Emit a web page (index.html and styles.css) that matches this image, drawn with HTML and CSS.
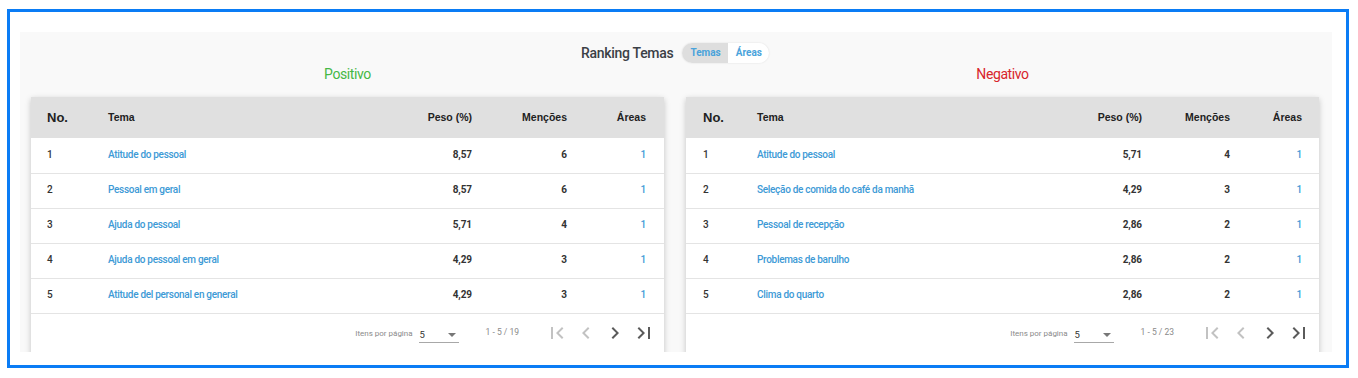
FILE: index.html
```html
<!DOCTYPE html>
<html lang="pt">
<head>
<meta charset="utf-8">
<title>Ranking Temas</title>
<link rel="stylesheet" href="styles.css">
</head>
<body>
<div class="frame">
  <div class="panel">
    <div class="panel-head">
      <span class="title">Ranking Temas</span>
      <div class="toggle">
        <span class="toggle-btn active">Temas</span>
        <span class="toggle-btn">Áreas</span>
      </div>
    </div>
    <div class="columns">
      <section class="column">
        <div class="label label-pos">Positivo</div>
        <div class="card">
          <table class="rank tbl-pos">
            <colgroup><col class="c-no"><col class="c-tema"><col class="c-peso"><col class="c-men"><col class="c-area"></colgroup>
            <thead>
              <tr><th class="h-no">No.</th><th>Tema</th><th class="num">Peso (%)</th><th class="num">Menções</th><th class="num">Áreas</th></tr>
            </thead>
            <tbody>
              <tr><td>1</td><td><a class="link">Atitude do pessoal</a></td><td class="num">8,57</td><td class="num">6</td><td class="num link">1</td></tr>
              <tr><td>2</td><td><a class="link">Pessoal em geral</a></td><td class="num">8,57</td><td class="num">6</td><td class="num link">1</td></tr>
              <tr><td>3</td><td><a class="link">Ajuda do pessoal</a></td><td class="num">5,71</td><td class="num">4</td><td class="num link">1</td></tr>
              <tr><td>4</td><td><a class="link">Ajuda do pessoal em geral</a></td><td class="num">4,29</td><td class="num">3</td><td class="num link">1</td></tr>
              <tr><td>5</td><td><a class="link">Atitude del personal en general</a></td><td class="num">4,29</td><td class="num">3</td><td class="num link">1</td></tr>
            </tbody>
          </table>
          <div class="pager">
            <span class="pager-label">Itens por página</span>
            <span class="select"><span>5</span><span class="caret"></span></span>
            <span class="range">1 - 5 / 19</span>
            <span class="icons">
              <svg class="ico off" viewBox="0 0 24 24"><path d="M18.41 16.59L13.82 12l4.59-4.59L17 6l-6 6 6 6zM6 6h2v12H6z"/></svg>
              <svg class="ico off" viewBox="0 0 24 24"><path d="M15.41 7.41L14 6l-6 6 6 6 1.41-1.41L10.83 12z"/></svg>
              <svg class="ico" viewBox="0 0 24 24"><path d="M10 6L8.59 7.41 13.170 12l-4.58 4.59L10 18l6-6z"/></svg>
              <svg class="ico" viewBox="0 0 24 24"><path d="M5.59 7.41L10.18 12l-4.59 4.59L7 18l6-6-6-6zM16 6h2v12h-2z"/></svg>
            </span>
          </div>
        </div>
      </section>
      <section class="column">
        <div class="label label-neg">Negativo</div>
        <div class="card">
          <table class="rank tbl-neg">
            <colgroup><col class="c-no"><col class="c-tema"><col class="c-peso"><col class="c-men"><col class="c-area"></colgroup>
            <thead>
              <tr><th class="h-no">No.</th><th>Tema</th><th class="num">Peso (%)</th><th class="num">Menções</th><th class="num">Áreas</th></tr>
            </thead>
            <tbody>
              <tr><td>1</td><td><a class="link">Atitude do pessoal</a></td><td class="num">5,71</td><td class="num">4</td><td class="num link">1</td></tr>
              <tr><td>2</td><td><a class="link">Seleção de comida do café da manhã</a></td><td class="num">4,29</td><td class="num">3</td><td class="num link">1</td></tr>
              <tr><td>3</td><td><a class="link">Pessoal de recepção</a></td><td class="num">2,86</td><td class="num">2</td><td class="num link">1</td></tr>
              <tr><td>4</td><td><a class="link">Problemas de barulho</a></td><td class="num">2,86</td><td class="num">2</td><td class="num link">1</td></tr>
              <tr><td>5</td><td><a class="link">Clima do quarto</a></td><td class="num">2,86</td><td class="num">2</td><td class="num link">1</td></tr>
            </tbody>
          </table>
          <div class="pager">
            <span class="pager-label">Itens por página</span>
            <span class="select"><span>5</span><span class="caret"></span></span>
            <span class="range">1 - 5 / 23</span>
            <span class="icons">
              <svg class="ico off" viewBox="0 0 24 24"><path d="M18.41 16.59L13.82 12l4.59-4.59L17 6l-6 6 6 6zM6 6h2v12H6z"/></svg>
              <svg class="ico off" viewBox="0 0 24 24"><path d="M15.41 7.41L14 6l-6 6 6 6 1.41-1.41L10.83 12z"/></svg>
              <svg class="ico" viewBox="0 0 24 24"><path d="M10 6L8.59 7.41 13.17 12l-4.58 4.59L10 18l6-6z"/></svg>
              <svg class="ico" viewBox="0 0 24 24"><path d="M5.59 7.41L10.18 12l-4.59 4.59L7 18l6-6-6-6zM16 6h2v12h-2z"/></svg>
            </span>
          </div>
        </div>
      </section>
    </div>
  </div>
</div>
</body>
</html>
```
FILE: styles.css
```css
* { box-sizing: border-box; }
html, body { margin: 0; padding: 0; background: #fff; }
body { font-family: Roboto, "Liberation Sans", sans-serif; color: #333; }

.frame {
  margin: 9px 9px 0 7px;
  height: 359px;
  border: 3px solid #0a7cf5;
  padding: 20px 14px 0 10px;
}

.panel {
  background: #f9f9f9;
  height: 320px;
  padding: 11px 13px 0 11px;
  overflow: hidden;
}

.panel-head {
  height: 20px;
  display: flex;
  justify-content: center;
  align-items: center;
  gap: 9px;
}
.title {
  font-size: 14px;
  letter-spacing: -0.3px;
  font-weight: 500;
  color: #3b4046;
  line-height: 20px;
}
.toggle {
  display: flex;
  height: 20px;
  border-radius: 10px;
  overflow: hidden;
  background: #fff;
  box-shadow: 0 0 2px rgba(0,0,0,0.12);
}
.toggle-btn {
  font-size: 10px;
  font-weight: 700;
  color: #4aa3db;
  line-height: 20px;
  padding: 0 7px 0 8px;
}
.toggle-btn.active { background: #dedede; }

.columns {
  display: flex;
  gap: 22px;
}
.column { width: 633px; }
.label {
  margin-top: 3px;
  line-height: 16px;
  font-size: 14px;
  letter-spacing: -0.4px;
  text-align: center;
  margin-bottom: 15px;
}
.label-pos { color: #45b845; }
.label-neg { color: #d8242b; }

.card {
  background: #fff;
  box-shadow: 0 2px 6px rgba(0,0,0,0.22);
  height: 260px;
}

.rank {
  width: 633px;
  border-collapse: collapse;
  table-layout: fixed;
}
.tbl-pos .c-no { width: 77px; }
.tbl-pos .c-tema { width: 244px; }
.tbl-pos .c-peso { width: 120px; }
.tbl-pos .c-men { width: 95px; }
.tbl-pos .c-area { width: 97px; }
.tbl-neg .c-no { width: 71px; }
.tbl-neg .c-tema { width: 265px; }
.tbl-neg .c-peso { width: 120px; }
.tbl-neg .c-men { width: 88px; }
.tbl-neg .c-area { width: 89px; }

.rank th {
  background: #e0e0e0;
  height: 41px;
  font-family: "Liberation Sans", Arial, sans-serif;
  font-weight: 700;
  font-size: 10.5px;
  color: #222;
  text-align: left;
  padding: 0 0 1px;
}
.rank th.h-no { font-size: 13px; }
.tbl-pos th:first-child, .tbl-pos td:first-child { padding-left: 16px; }
.tbl-neg th:first-child, .tbl-neg td:first-child { padding-left: 17px; }
.tbl-pos th:last-child, .tbl-pos td:last-child { padding-right: 18px; }
.tbl-neg th:last-child, .tbl-neg td:last-child { padding-right: 17px; }

.rank td {
  height: 35px;
  border-bottom: 1px solid #e4e4e4;
  font-size: 10px;
  letter-spacing: -0.3px;
  font-weight: 500;
  color: #333;
  padding: 0 0 2px;
}
.rank td.num { font-weight: 700; letter-spacing: -0.1px; }
.rank .num { text-align: right; }
.link { color: #3d9ad6; text-decoration: none; }
.rank td.link { color: #3d9ad6; font-weight: 500; }

.pager {
  height: 39px;
  display: flex;
  align-items: center;
  justify-content: flex-end;
  padding-right: 6px;
  color: #8a8a8a;
  font-size: 8px;
}
.pager-label { margin-right: 6px; }
.select {
  width: 40px;
  height: 17px;
  border-bottom: 1px solid #a8a8a8;
  display: flex;
  align-items: center;
  justify-content: space-between;
  color: #333;
  font-size: 9.5px;
  padding: 2px 3px 0 1px;
  margin-top: 2px;
}
.caret {
  width: 0; height: 0;
  border-left: 4px solid transparent;
  border-right: 4px solid transparent;
  border-top: 4px solid #777;
}
.range { margin-left: 27px; margin-right: 23px; font-size: 8.5px; margin-top: -2px; }
.icons { display: flex; }
.ico {
  width: 24px;
  height: 24px;
  margin: 0 2.5px;
  fill: #5b5b5b;
}
.ico.off { fill: #c2c2c2; }
```
